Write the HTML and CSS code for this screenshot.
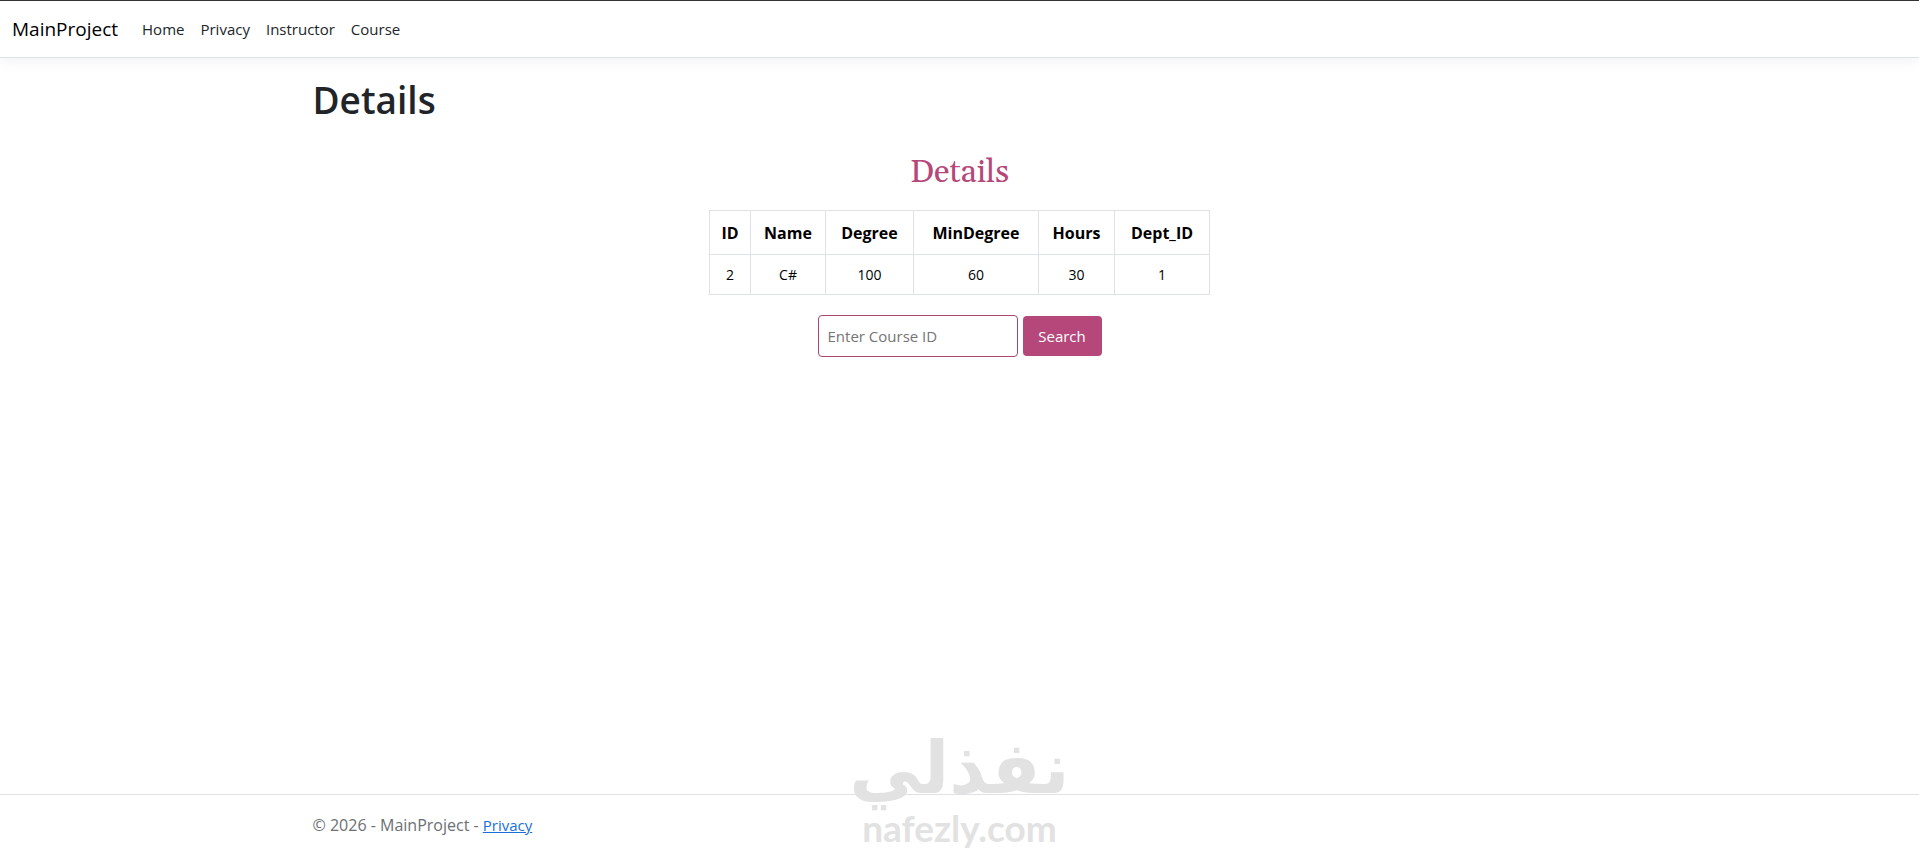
FILE: index.html
```
<!DOCTYPE html>
<html lang="en">
<head>
<meta charset="utf-8">
<meta name="viewport" content="width=device-width, initial-scale=1.0">
<title>Details - MainProject</title>
<link rel="stylesheet" href="styles.css">
</head>

<body>
<header>
	<nav class="navbar">
		<a class="brand" href="#">MainProject</a>
		<ul class="nav-list">
			<li><a href="#">Home</a></li>
			<li><a href="#">Privacy</a></li>
			<li><a href="#">Instructor</a></li>
			<li><a href="#">Course</a></li>
		</ul>
	</nav>
</header>

<main class="container">
	<h1>Details</h1>
	<div class="details">
		<h2>Details</h2>
		<table>
			<colgroup>
				<col class="col-id">
				<col class="col-name">
				<col class="col-degree">
				<col class="col-min">
				<col class="col-hours">
				<col class="col-dept">
			</colgroup>
			<thead>
				<tr>
					<th>ID</th>
					<th>Name</th>
					<th>Degree</th>
					<th>MinDegree</th>
					<th>Hours</th>
					<th>Dept_ID</th>
				</tr>
			</thead>
			<tbody>
				<tr>
					<td>2</td>
					<td>C#</td>
					<td>100</td>
					<td>60</td>
					<td>30</td>
					<td>1</td>
				</tr>
			</tbody>
		</table>
		<form class="search">
			<input type="text" name="id" placeholder="Enter Course ID" aria-label="Course ID">
			<button type="submit">Search</button>
		</form>
	</div>
</main>

<footer>
	<div class="container">
		&copy; 2026 - MainProject - <a href="#">Privacy</a>
	</div>
</footer>

<div class="watermark">
	<span class="mark-ar" lang="ar" dir="rtl">نفذلي</span>
	<span class="mark-en">nafezly.com</span>
</div>
</body>
</html>
```
FILE: styles.css
```
* {margin:0; padding:0; box-sizing:border-box;}
li {list-style:none;}

body {min-height:100vh; display:flex; flex-direction:column; position:relative; overflow-x:hidden; border-top:1px solid #333; background:#fff; color:#212529; font:15px/24px "Segoe UI", "Open Sans", "Noto Sans", sans-serif;}

.container {width:100%; max-width:1320px; margin:0 auto; padding:0 13px;}

/* navbar */
.navbar {display:flex; align-items:center; height:57px; padding:0 12px; border-bottom:1px solid #dee2e6; box-shadow:0 4px 12px rgba(0,0,0,0.05);}
.navbar a {text-decoration:none; color:#212529;}
.navbar .brand {margin-right:16px; font-size:19px; color:#000;}
.nav-list {display:flex;}
.nav-list a {padding:8px;}

/* content */
main {flex:1;}
h1 {padding-top:18px; font-size:37px; line-height:48px; font-weight:600;}
.details {display:flex; flex-direction:column; align-items:center; padding-top:25px;}
h2 {font:400 32px/48px Georgia, Gelasio, "DejaVu Serif", serif; color:#b5477a;}

table {table-layout:fixed; width:500px; margin-top:13px; border-collapse:collapse; color:#000; text-align:center;}
.col-id {width:41px;}
.col-name {width:75px;}
.col-degree {width:88px;}
.col-min {width:125px;}
.col-hours {width:76px;}
.col-dept {width:95px;}
th, td {border:1px solid #dee2e6;}
th {height:44px; font-size:16px; font-weight:700;}
td {height:40px; font-size:14px;}

.search {display:flex; align-items:center; gap:5px; margin-top:20px;}
.search input {width:200px; height:42px; padding:0 9px; border:1px solid #a8476f; border-radius:4px; background:#fff; font:inherit;}
.search input::placeholder {color:#757575;}
.search button {width:79px; height:40px; border:0; border-radius:4px; background:#b5477a; color:#fff; font:inherit; cursor:pointer;}

/* footer */
footer {border-top:1px solid #dee2e6; color:#6c6f73;}
footer .container {padding-top:18px; padding-bottom:13px; font-size:16px;}
footer a {color:#1a6fdc; font-size:15px;}

/* site mark over the page bottom */
.watermark {position:absolute; left:0; right:0; bottom:0; display:flex; flex-direction:column; align-items:center; color:#e2e2e2; font-weight:700; pointer-events:none;}
.mark-ar {font-family:"DejaVu Sans", sans-serif; font-size:72px; line-height:76px;}
.mark-en {font-family:Lato, sans-serif; font-size:37px; line-height:44px;}
```
